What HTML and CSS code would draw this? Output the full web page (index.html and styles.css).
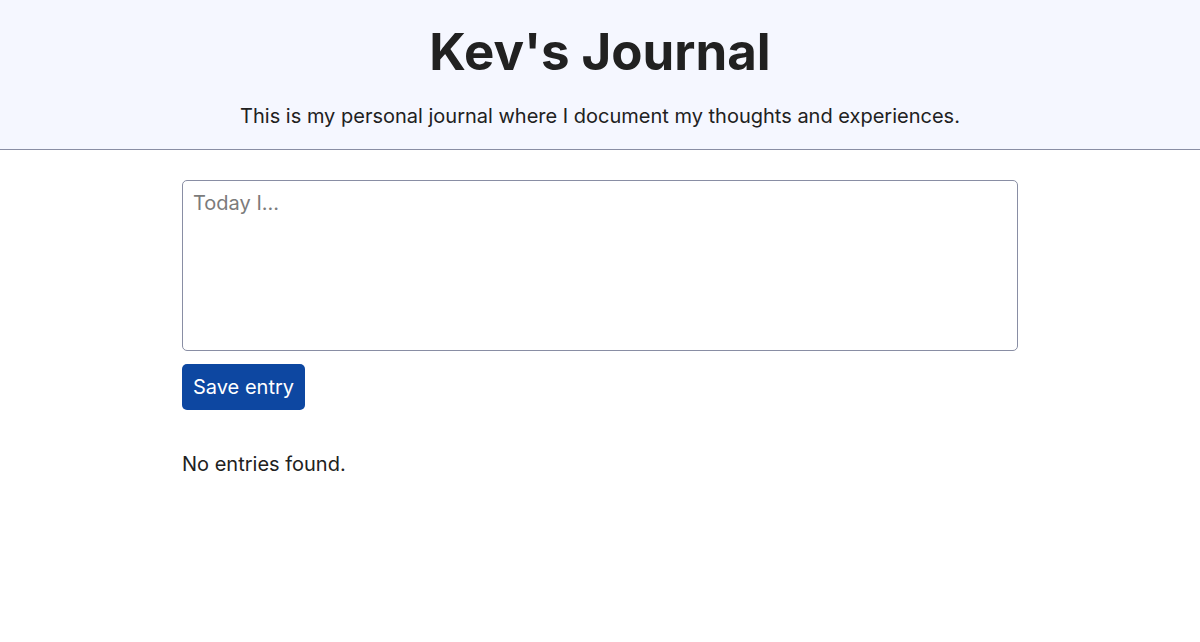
FILE: index.html
```html
<!DOCTYPE html>
<html lang="en">
<head>
  <meta charset="UTF-8" />
  <meta name="viewport" content="width=device-width, initial-scale=1.0" />
  <title>Kev's Journal</title>
  <link rel="stylesheet" href="styles.css">
</head>
<body>
  <header class="site-header">
    <h1>Kev's Journal</h1>
    <p>This is my personal journal where I document my thoughts and experiences.</p>
  </header>
  <main class="content">
    <form class="entry-form">
      <textarea class="entry-text" placeholder="Today I..."></textarea>
      <button type="button" class="btn-save">Save entry</button>
    </form>
    <p class="empty">No entries found.</p>
  </main>
</body>
</html>
```

FILE: styles.css
```css
body {
  font-family: Inter, "Noto Sans", sans-serif;
  font-size: 20px;
  line-height: 1.5;
  color: #212121;
  background-color: #fff;
  margin: 0;
  padding: 0;
}
.site-header {
  background-color: #f5f7ff;
  border-bottom: 1px solid #898ea4;
  text-align: center;
  padding: 21px 10px 18px;
}
.site-header h1 {
  font-size: 51px;
  line-height: 1.2;
  margin: 0 0 19px;
}
.site-header p {
  margin: 0;
}
.content {
  width: 836px;
  margin: 30px auto 0;
}
.entry-form {
  display: flex;
  flex-direction: column;
  align-items: flex-start;
}
.entry-text {
  box-sizing: border-box;
  width: 100%;
  height: 171px;
  padding: 10px;
  font-family: inherit;
  font-size: 20px;
  border: 1px solid #898ea4;
  border-radius: 5px;
  resize: none;
  margin: 0 0 13px;
}
.entry-text::placeholder {
  color: #7b7b7b;
}
.btn-save {
  background-color: #0d47a1;
  color: white;
  border: none;
  border-radius: 5px;
  font-family: inherit;
  font-size: 20px;
  padding: 8px 11px;
  line-height: 1.5;
  cursor: pointer;
}
.empty {
  margin: 39px 0 0;
}
```
